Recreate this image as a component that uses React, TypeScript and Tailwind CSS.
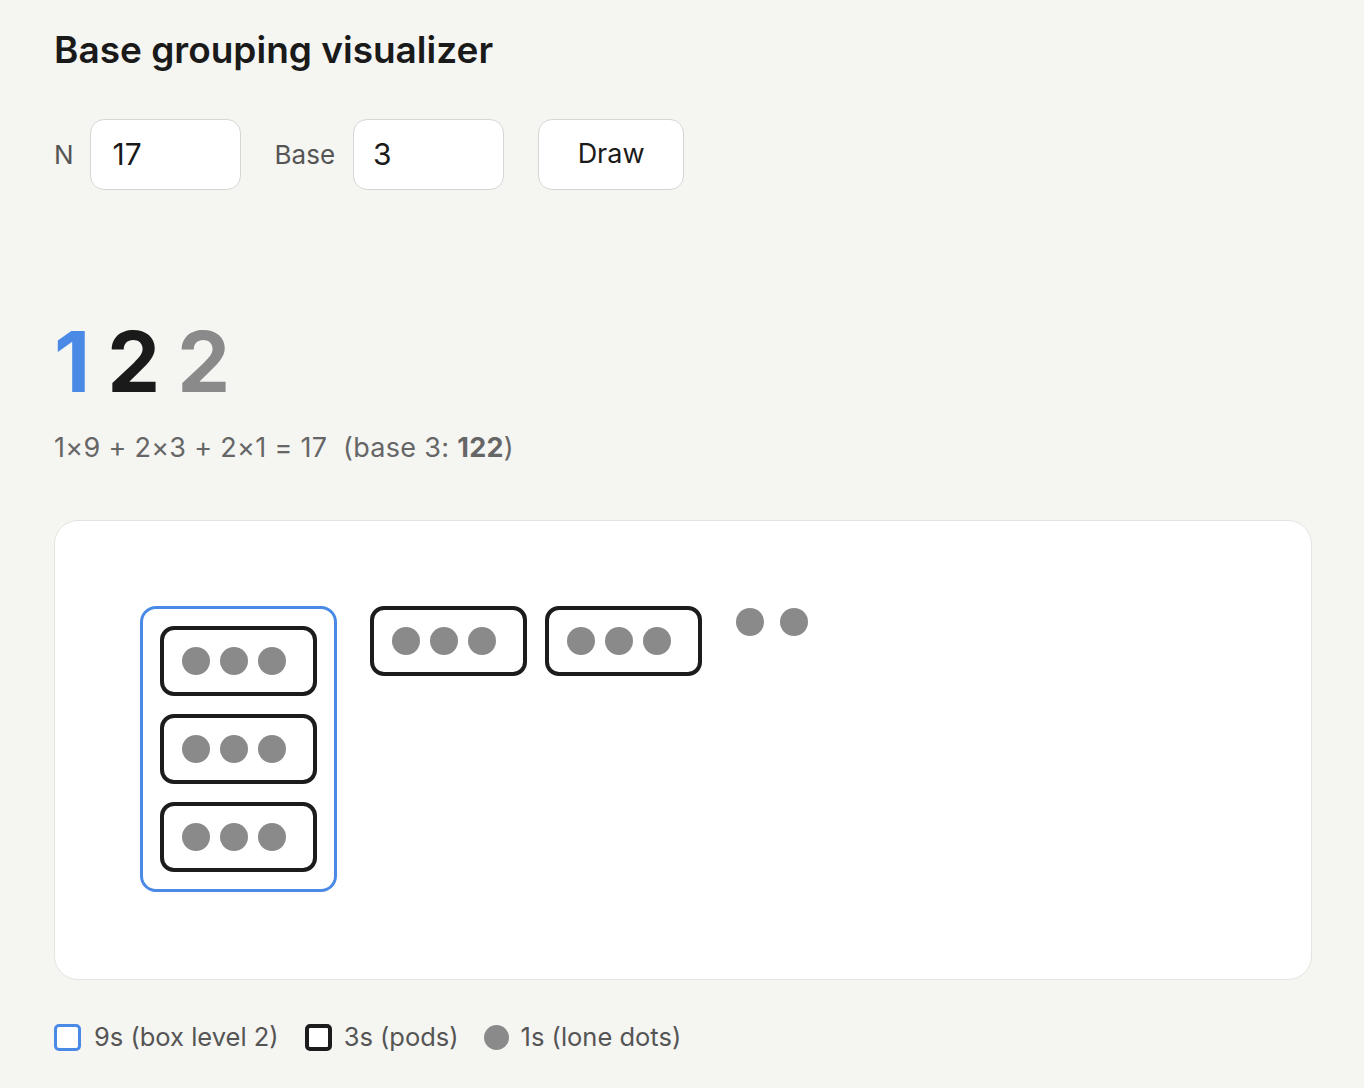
import React from "react";

const Dot = () => <div className="w-[28px] h-[28px] rounded-full bg-[#8a8a8a] shrink-0" />;

const Pod = () => (
  <div className="w-[157px] h-[70px] rounded-[14px] border-[4px] border-[#1c1c1c] bg-white flex items-center gap-[10px] pl-[18px]">
    <Dot />
    <Dot />
    <Dot />
  </div>
);

export default function App() {
  return (
    <div className="min-h-screen bg-[#f5f5f2] px-[54px] pt-[28px] pb-[40px] font-['Inter',sans-serif]">
      <h1 className="text-[37px] font-semibold leading-[44px] text-[#1a1a1a]">
        Base grouping visualizer
      </h1>

      <div className="mt-[47px] flex items-center gap-[34px]">
        <div className="flex items-center gap-[16px]">
          <span className="text-[26px] text-[#555]">N</span>
          <div className="w-[151px] h-[71px] rounded-[14px] border border-[#d6d6d6] bg-white flex items-center pl-[22px] text-[30px] text-[#1a1a1a]">
            17
          </div>
        </div>
        <div className="flex items-center gap-[18px]">
          <span className="text-[26px] text-[#555]">Base</span>
          <div className="w-[151px] h-[71px] rounded-[14px] border border-[#d6d6d6] bg-white flex items-center pl-[19px] text-[30px] text-[#1a1a1a]">
            3
          </div>
        </div>
        <button className="w-[146px] h-[71px] rounded-[14px] border border-[#d6d6d6] bg-white text-[27px] text-[#1a1a1a]">
          Draw
        </button>
      </div>

      <div className="mt-[130px] flex gap-[17px] text-[84px] font-bold leading-none">
        <span className="text-[#4a8ae6]">1</span>
        <span className="text-[#1a1a1a]">2</span>
        <span className="text-[#8a8a8a]">2</span>
      </div>

      <div className="mt-[28px] text-[27px] leading-[32px] tracking-[0.3px] text-[#666] whitespace-pre">
        {"1×9 + 2×3 + 2×1 = 17  (base 3: "}
        <span className="font-bold">122</span>
        {")"}
      </div>

      <div className="mt-[56px] w-[1258px] h-[460px] rounded-[24px] border border-[#e4e4e0] bg-white p-[85px]">
        <div className="flex items-start gap-[33px]">
          <div className="rounded-[16px] border-[3px] border-[#4a8ae6] p-[17px] flex flex-col gap-[18px]">
            <Pod />
            <Pod />
            <Pod />
          </div>
          <div className="flex gap-[18px]">
            <Pod />
            <Pod />
          </div>
          <div className="flex gap-[16px] mt-[2px] ml-[1px]">
            <Dot />
            <Dot />
          </div>
        </div>
      </div>

      <div className="mt-[38px] flex items-center text-[25.5px] text-[#555]">
        <div className="w-[27px] h-[27px] rounded-[5px] border-[3px] border-[#4a8ae6] bg-white" />
        <span className="ml-[13px]">9s (box level 2)</span>
        <div className="ml-[26px] w-[27px] h-[27px] rounded-[5px] border-[4px] border-[#1c1c1c] bg-white" />
        <span className="ml-[12px]">3s (pods)</span>
        <div className="ml-[25px] w-[25px] h-[25px] rounded-full bg-[#8a8a8a]" />
        <span className="ml-[12px]">1s (lone dots)</span>
      </div>
    </div>
  );
}
